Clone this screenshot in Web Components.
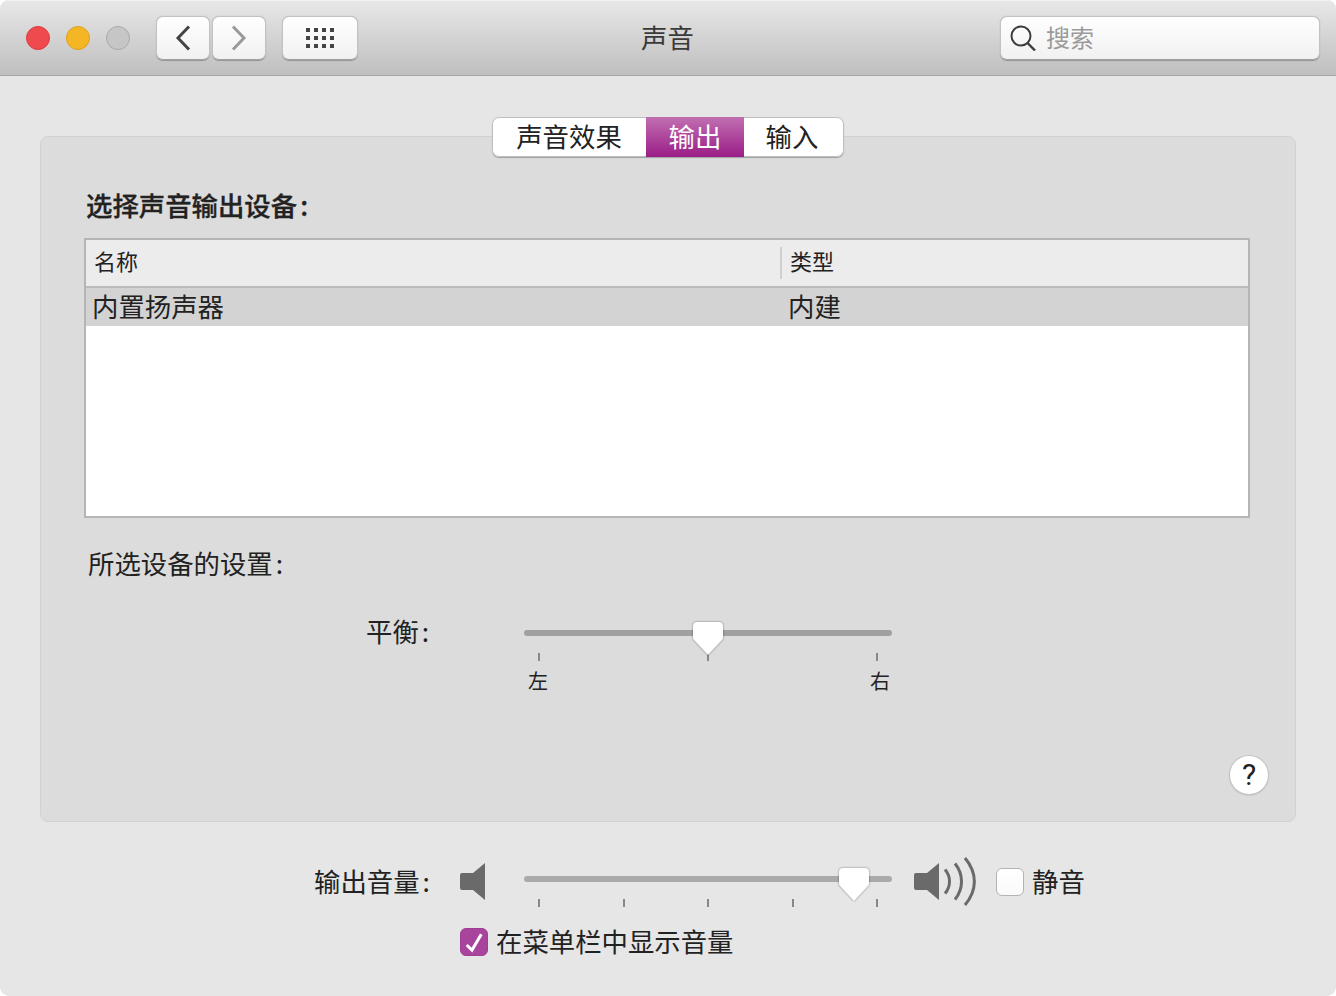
<!DOCTYPE html>
<html lang="zh">
<head>
<meta charset="utf-8">
<title>声音</title>
<style>
  html, body { margin: 0; background: #fff; }
  body { font-family: "Noto Sans CJK SC", "Liberation Sans", sans-serif; color: #222; }
</style>
</head>
<body>
<sound-window>
  <title-bar slot="top" heading="声音" placeholder="搜索"></title-bar>
  <tab-strip>
    <tab-item width="154">声音效果</tab-item>
    <tab-item width="98" selected>输出</tab-item>
    <tab-item width="100" style="padding-right:4px">输入</tab-item>
  </tab-strip>
  <settings-panel>
    <section-label strong text="选择声音输出设备"></section-label>
    <device-table>
      <device-row name="内置扬声器" type="内建"></device-row>
    </device-table>
    <section-label inset text="所选设备的设置"></section-label>
    <balance-row label="平衡">
      <level-slider value="50" ticks="3">
        <span slot="start">左</span>
        <span slot="end">右</span>
      </level-slider>
    </balance-row>
    <help-button></help-button>
  </settings-panel>
  <volume-row></volume-row>
</sound-window>

<script>
const COLON = '<span style="margin-left:3px">:</span>';

class SoundWindow extends HTMLElement {
    connectedCallback() {
        this.attachShadow({ mode: 'open' });
        this.shadowRoot.innerHTML = `
            <style>
                :host {
                    display: flex;
                    flex-direction: column;
                    width: 1336px;
                    height: 996px;
                    background: #e6e6e6;
                    border-radius: 9px;
                    overflow: hidden;
                }
                .body {
                    display: flex;
                    flex-direction: column;
                    align-items: center;
                    padding: 41px 40px 0;
                }
            </style>
            <slot name="top"></slot>
            <div class="body"><slot></slot></div>
        `;
    }
}
customElements.define('sound-window', SoundWindow);

class TitleBar extends HTMLElement {
    connectedCallback() {
        this.attachShadow({ mode: 'open' });
        this.shadowRoot.innerHTML = `
            <style>
                :host {
                    display: flex;
                    align-items: flex-start;
                    box-sizing: border-box;
                    height: 76px;
                    padding: 16px 16px 0 26px;
                    background: linear-gradient(#e8e8e8, #bfbfbf);
                    border-bottom: 1px solid #a6a6a6;
                    box-shadow: inset 0 1px 0 #f2f2f2;
                }
                .lights { display: flex; gap: 16px; margin-top: 10px; }
                .light {
                    box-sizing: border-box;
                    width: 24px;
                    height: 24px;
                    border-radius: 50%;
                    border: 1px solid;
                }
                .red { background: #ef4a4e; border-color: #dc3b3f; }
                .yellow { background: #f5b625; border-color: #df9f1e; }
                .grey { background: #c6c6c6; border-color: #a9a9a9; }
                .btn {
                    box-sizing: border-box;
                    display: flex;
                    align-items: center;
                    justify-content: center;
                    height: 44px;
                    background: linear-gradient(#ffffff, #f1f1f1);
                    border: 1px solid #c2c2c2;
                    border-bottom-color: #a0a0a0;
                    border-radius: 7px;
                    box-shadow: 0 0.5px 1px rgba(0, 0, 0, 0.25);
                }
                .nav { display: flex; gap: 2px; margin-left: 26px; }
                .nav .btn { width: 54px; }
                .apps { width: 76px; margin-left: 16px; }
                .title {
                    flex: 1;
                    box-sizing: border-box;
                    padding-right: 23px;
                    text-align: center;
                    font-size: 26.4px;
                    line-height: 42px;
                    color: #3a3a3a;
                }
                .search {
                    justify-content: flex-start;
                    width: 320px;
                    padding-left: 9px;
                    gap: 10px;
                    font-size: 24px;
                    color: #9a9a9a;
                }
                .search span { line-height: 30px; padding-bottom: 3px; }
                svg { display: block; }
            </style>
            <div class="lights">
                <div class="light red"></div>
                <div class="light yellow"></div>
                <div class="light grey"></div>
            </div>
            <div class="nav">
                <div class="btn">
                    <svg width="16" height="26" viewBox="0 0 16 26"><path d="M14 1.5 3 13l11 11.500" fill="none" stroke="#444" stroke-width="3"/></svg>
                </div>
                <div class="btn">
                    <svg width="16" height="26" viewBox="0 0 16 26"><path d="M2 1.500 13 13 2 24.500" fill="none" stroke="#999" stroke-width="3"/></svg>
                </div>
            </div>
            <div class="btn apps">
                <svg width="28" height="20" viewBox="0 0 28 20" fill="#444">
                    <rect x="0" y="0" width="4" height="4"/><rect x="8" y="0" width="4" height="4"/><rect x="16" y="0" width="4" height="4"/><rect x="24" y="0" width="4" height="4"/>
                    <rect x="0" y="8" width="4" height="4"/><rect x="8" y="8" width="4" height="4"/><rect x="16" y="8" width="4" height="4"/><rect x="24" y="8" width="4" height="4"/>
                    <rect x="0" y="16" width="4" height="4"/><rect x="8" y="16" width="4" height="4"/><rect x="16" y="16" width="4" height="4"/><rect x="24" y="16" width="4" height="4"/>
                </svg>
            </div>
            <div class="title">${this.getAttribute('heading')}</div>
            <div class="btn search">
                <svg width="26" height="26" viewBox="0 0 26 26" fill="none" stroke="#3c3c3c" stroke-width="2"><circle cx="11" cy="11" r="9.500"/><path d="M17.500 18 25 25.500" stroke-width="2.400"/></svg>
                <span>${this.getAttribute('placeholder')}</span>
            </div>
        `;
    }
}
customElements.define('title-bar', TitleBar);

class TabStrip extends HTMLElement {
    connectedCallback() {
        this.attachShadow({ mode: 'open' });
        this.shadowRoot.innerHTML = `
            <style>
                :host {
                    display: flex;
                    position: relative;
                    z-index: 1;
                    height: 40px;
                    margin-bottom: -21px;
                    background: #fff;
                    border-radius: 7px;
                    overflow: hidden;
                    box-shadow: inset 0 0 0 1px #bfbfbf, 0 1px 1px #a0a0a0;
                }
            </style>
            <slot></slot>
        `;
    }
}
customElements.define('tab-strip', TabStrip);

class TabItem extends HTMLElement {
    connectedCallback() {
        this.attachShadow({ mode: 'open' });
        this.shadowRoot.innerHTML = `
            <style>
                :host {
                    display: block;
                    box-sizing: border-box;
                    width: ${this.getAttribute('width')}px;
                    height: 40px;
                    text-align: center;
                    font-size: 26.4px;
                    line-height: 38px;
                    color: #222;
                }
                :host([selected]) {
                    color: #fff;
                    background: linear-gradient(#c16fb1, #9a1d87);
                }
            </style>
            <slot></slot>
        `;
    }
}
customElements.define('tab-item', TabItem);

class SettingsPanel extends HTMLElement {
    connectedCallback() {
        this.attachShadow({ mode: 'open' });
        this.shadowRoot.innerHTML = `
            <style>
                :host {
                    display: flex;
                    flex-direction: column;
                    box-sizing: border-box;
                    width: 1256px;
                    height: 686px;
                    padding: 52px 26px 26px 43px;
                    background: #dcdcdc;
                    border: 1px solid #d1d1d1;
                    border-radius: 8px;
                }
            </style>
            <slot></slot>
        `;
    }
}
customElements.define('settings-panel', SettingsPanel);

class SectionLabel extends HTMLElement {
    connectedCallback() {
        this.attachShadow({ mode: 'open' });
        this.shadowRoot.innerHTML = `
            <style>
                :host {
                    display: block;
                    font-size: 26.4px;
                    line-height: 32px;
                    padding-bottom: 4px;
                    color: #222;
                    margin-left: 2px;
                }
                :host([strong]) { font-weight: 500; -webkit-text-stroke: 0.3px #222; }
                :host([inset]) { margin: 29px 0 0 4px; }
            </style>
            ${this.getAttribute('text')}${COLON}
        `;
    }
}
customElements.define('section-label', SectionLabel);

class DeviceTable extends HTMLElement {
    connectedCallback() {
        this.attachShadow({ mode: 'open' });
        this.shadowRoot.innerHTML = `
            <style>
                :host {
                    display: block;
                    box-sizing: border-box;
                    width: 1166px;
                    height: 280px;
                    margin-top: 13px;
                    background: #fff;
                    border: 2px solid #b5b5b5;
                }
                .head {
                    display: flex;
                    box-sizing: border-box;
                    height: 48px;
                    background: #ececec;
                    border-bottom: 2px solid #bcbcbc;
                    font-size: 22px;
                    line-height: 41px;
                    color: #222;
                }
                .name { width: 694px; padding-left: 8px; box-sizing: border-box; }
                .type { position: relative; padding-left: 8px; border-left: 2px solid transparent; }
                .type::before {
                    content: '';
                    position: absolute;
                    left: -2px;
                    top: 7px;
                    width: 2px;
                    height: 32px;
                    background: #cfcfcf;
                }
            </style>
            <div class="head">
                <div class="name">名称</div>
                <div class="type">类型</div>
            </div>
            <slot></slot>
        `;
    }
}
customElements.define('device-table', DeviceTable);

class DeviceRow extends HTMLElement {
    connectedCallback() {
        this.attachShadow({ mode: 'open' });
        this.shadowRoot.innerHTML = `
            <style>
                :host {
                    display: flex;
                    height: 38px;
                    background: #d3d3d3;
                    font-size: 26.4px;
                    line-height: 36px;
                    color: #222;
                }
                .name { width: 696px; padding-left: 6px; box-sizing: border-box; }
                .type { padding-left: 6px; }
            </style>
            <div class="name">${this.getAttribute('name')}</div>
            <div class="type">${this.getAttribute('type')}</div>
        `;
    }
}
customElements.define('device-row', DeviceRow);

class LevelSlider extends HTMLElement {
    connectedCallback() {
        const value = Number(this.getAttribute('value'));
        const ticks = Number(this.getAttribute('ticks'));
        const tickMarks = Array.from({ length: ticks }, () => '<i></i>').join('');
        this.attachShadow({ mode: 'open' });
        this.shadowRoot.innerHTML = `
            <style>
                :host {
                    display: block;
                    position: relative;
                    width: 368px;
                    padding-top: 9px;
                    --rail: #a0a0a0;
                }
                .rail {
                    height: 6px;
                    border-radius: 3px;
                    background: var(--rail);
                }
                .ticks {
                    display: flex;
                    justify-content: space-between;
                    margin-top: 17px;
                    padding: 0 14px;
                }
                i { display: block; width: 2px; height: 8px; background: #888; }
                .thumb {
                    position: absolute;
                    top: 0;
                    left: ${value}%;
                    margin-left: -17px;
                    filter: drop-shadow(0 0.5px 1px rgba(0, 0, 0, 0.45));
                }
                .labels {
                    display: flex;
                    justify-content: space-between;
                    padding: 7px 2px 0 4px;
                    font-size: 20px;
                    line-height: 26px;
                    color: #222;
                }
            </style>
            <div class="rail"></div>
            <div class="ticks">${tickMarks}</div>
            <div class="labels"><slot name="start"></slot><slot name="end"></slot></div>
            <svg class="thumb" width="34" height="36" viewBox="0 0 34 36"><path d="M6 1h22a4 4 0 0 1 4 4v12a2 2 0 0 1-.6 1.500L17 34 2.600 18.500A2 2 0 0 1 2 17V5a4 4 0 0 1 4-4z" fill="#fff"/></svg>
        `;
    }
}
customElements.define('level-slider', LevelSlider);

class BalanceRow extends HTMLElement {
    connectedCallback() {
        this.attachShadow({ mode: 'open' });
        this.shadowRoot.innerHTML = `
            <style>
                :host {
                    display: flex;
                    margin-top: 31px;
                    padding-left: 282px;
                }
                .label {
                    font-size: 26.4px;
                    line-height: 34px;
                    color: #222;
                    width: 158px;
                }
                .control { margin-top: 7px; }
            </style>
            <div class="label">${this.getAttribute('label')}${COLON}</div>
            <div class="control"><slot></slot></div>
        `;
    }
}
customElements.define('balance-row', BalanceRow);

class HelpButton extends HTMLElement {
    connectedCallback() {
        this.attachShadow({ mode: 'open' });
        this.shadowRoot.innerHTML = `
            <style>
                :host {
                    display: block;
                    box-sizing: border-box;
                    width: 38px;
                    height: 38px;
                    margin: auto 1px 1px auto;
                    border-radius: 50%;
                    background: #fff;
                    box-shadow: 0 0 0 1px #c4c4c4, 0 1px 2px #a0a0a0;
                    font-family: Roboto, "Liberation Sans", sans-serif;
                    font-weight: 400;
                    font-size: 30px;
                    line-height: 38px;
                    text-align: center;
                    color: #222;
                }
            </style>
            ?
        `;
    }
}
customElements.define('help-button', HelpButton);

class CheckField extends HTMLElement {
    connectedCallback() {
        this.attachShadow({ mode: 'open' });
        this.shadowRoot.innerHTML = `
            <style>
                :host {
                    display: flex;
                    align-items: center;
                    gap: 8px;
                    height: 36px;
                    font-size: 26.4px;
                    color: #222;
                }
                .box {
                    box-sizing: border-box;
                    width: 28px;
                    height: 28px;
                    border-radius: 6px;
                    background: linear-gradient(#fff, #fafafa);
                    border: 1px solid #b4b4b4;
                }
                :host([checked]) .box {
                    background: #a9449d;
                    border-color: #a03d94;
                }
                .text { line-height: 34px; padding-bottom: 2px; }
                svg { display: none; margin: -1px; }
                :host([checked]) svg { display: block; }
            </style>
            <div class="box">
                <svg width="28" height="28" viewBox="0 0 28 28"><path d="M6.700 17 12 22l9.300-15.700" fill="none" stroke="#fff" stroke-width="3"/></svg>
            </div>
            <span class="text"><slot></slot></span>
        `;
    }
}
customElements.define('check-field', CheckField);

class VolumeRow extends HTMLElement {
    connectedCallback() {
        this.attachShadow({ mode: 'open' });
        this.shadowRoot.innerHTML = `
            <style>
                :host {
                    display: block;
                    align-self: stretch;
                    margin: 42px -40px 0;
                    font-size: 26.4px;
                    line-height: 34px;
                    color: #222;
                }
                .line { display: flex; align-items: flex-start; padding-left: 314px; }
                .label { width: 146px; }
                level-slider { --rail: #aaaaaa; margin: 3px 22px 0 38px; }
                .quiet { margin-top: -1px; }
                .loud { margin-top: -7px; margin-right: 19px; }
                .menu { padding-left: 460px; margin-top: 10px; }
                svg { display: block; }
            </style>
            <div class="line">
                <div class="label">输出音量${COLON}</div>
                <svg class="quiet" width="26" height="38" viewBox="0 0 26 38" fill="#6a6a6a"><path d="M0 12a2 2 0 0 1 2-2h11L25 0v37L13 27H2a2 2 0 0 1-2-2z"/></svg>
                <level-slider value="89.700" ticks="5"></level-slider>
                <svg class="loud" width="63" height="49" viewBox="0 0 63 49" fill="none" stroke="#6a6a6a" stroke-width="3">
                    <path d="M0 18a2 2 0 0 1 2-2h11L25 6v37L13 33H2a2 2 0 0 1-2-2z" fill="#6a6a6a" stroke="none"/>
                    <path d="M31 12.500c6 7 6 17 0 24"/>
                    <path d="M41 6.500c8.700 11 8.700 25 0 36"/>
                    <path d="M51 1c12.500 15 12.500 32 0 47"/>
                </svg>
                <check-field>静音</check-field>
            </div>
            <div class="menu"><check-field checked>在菜单栏中显示音量</check-field></div>
        `;
    }
}
customElements.define('volume-row', VolumeRow);
</script>
</body>
</html>
